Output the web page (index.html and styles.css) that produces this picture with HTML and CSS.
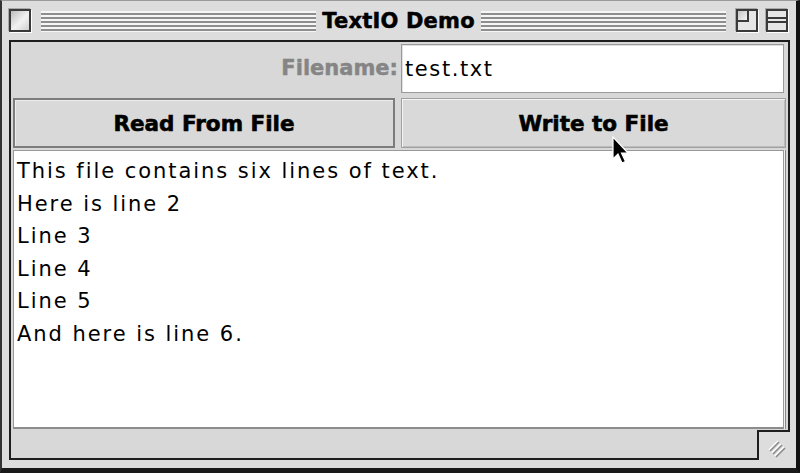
FILE: index.html
```html
<!DOCTYPE html>
<html>
<head>
<meta charset="utf-8">
<link rel="stylesheet" href="styles.css">
</head>
<body>
<div class="window">
  <div class="titlebar">
    <div class="tside">
      <span class="tbox close"></span>
      <span class="stripes"></span>
    </div>
    <span class="title">TextIO Demo</span>
    <div class="tside">
      <span class="stripes"></span>
      <span class="tbox zoom"><span class="zoom-inner"></span></span>
      <span class="tbox collapse"><span class="collapse-inner"></span></span>
    </div>
  </div>
  <div class="content">
    <div class="row file-row">
      <label class="label">Filename:</label>
      <div class="field">test.txt</div>
    </div>
    <div class="row btn-row">
      <button class="btn default">Read From File</button>
      <button class="btn">Write to File</button>
    </div>
    <div class="textarea">
      <div class="line">This file contains six lines of text.</div>
      <div class="line">Here is line 2</div>
      <div class="line">Line 3</div>
      <div class="line">Line 4</div>
      <div class="line">Line 5</div>
      <div class="line">And here is line 6.</div>
    </div>
    <div class="strip"></div>
    <div class="growbox">
      <svg width="22" height="22" viewBox="0 0 22 22">
        <g stroke-width="1.6" fill="none">
          <line x1="3" y1="13" x2="12" y2="4" stroke="#ffffff"/>
          <line x1="4" y1="14" x2="13" y2="5" stroke="#8a8a8a"/>
          <line x1="6" y1="16" x2="15" y2="7" stroke="#ffffff"/>
          <line x1="7" y1="17" x2="16" y2="8" stroke="#8a8a8a"/>
          <line x1="9" y1="19" x2="18" y2="10" stroke="#ffffff"/>
          <line x1="10" y1="20" x2="19" y2="11" stroke="#8a8a8a"/>
        </g>
      </svg>
    </div>
  </div>
  <svg class="cursor" width="18" height="30" viewBox="0 0 18 30">
    <path d="M1 1 L1 23 L6 18 L10 27 L13.5 25.5 L9.5 17 L16 17 Z" fill="#000" stroke="#fff" stroke-width="1.2" stroke-linejoin="miter"/>
  </svg>
</div>
</body>
</html>
```
FILE: styles.css
```css
* { box-sizing: border-box; }
html, body { margin: 0; padding: 0; background: #dcdcdc; }
.window {
  position: relative;
  width: 800px;
  height: 473px;
  background: #dddddd;
  border-top: 1px solid #9a9a9a;
  border-left: 2px solid #333;
  border-right: 4px solid #111;
  border-bottom: 5px solid #1a1a1a;
  display: flex;
  flex-direction: column;
  font-family: "DejaVu Sans", sans-serif;
}
.titlebar {
  height: 39px;
  display: flex;
  align-items: center;
  padding: 0 8px 0 7px;
}
.tside {
  flex: 1;
  display: flex;
  align-items: center;
}
.tbox {
  width: 22px;
  height: 23px;
  border: 2px solid #3a3a3a;
  box-shadow: 1px 1px 0 #ffffff, -1px -1px 0 #a8a8a8;
  background: linear-gradient(135deg, #bcbcbc 0%, #f2f2f2 55%, #d0d0d0 100%);
  flex: none;
  position: relative;
}
.close { margin-right: 10px; }
.stripes {
  flex: 1;
  height: 22px;
  background: repeating-linear-gradient(to bottom, #f6f6f6 0px, #f6f6f6 2px, #8e8e8e 2px, #8e8e8e 4px);
  background-size: 100% 24px;
  background-repeat: no-repeat;
  background-position: 0 1px;
}
.title {
  font-weight: bold;
  font-size: 21px;
  color: #000;
  padding: 0 6px;
  letter-spacing: 0.2px;
  line-height: 22px;
  -webkit-text-stroke: 0.5px #000;
}
.zoom {
  margin-left: 10px;
  background: #e6e6e6;
}
.zoom-inner {
  position: absolute;
  left: 0; top: 0;
  width: 11px; height: 11px;
  border-right: 2px solid #3a3a3a;
  border-bottom: 2px solid #3a3a3a;
  background: linear-gradient(135deg, #c4c4c4, #f4f4f4);
}
.collapse {
  margin-left: 8px;
  background: #e6e6e6;
}
.collapse-inner {
  position: absolute;
  left: 0; right: 0; top: 6px;
  height: 6px;
  border-top: 2px solid #3a3a3a;
  border-bottom: 2px solid #3a3a3a;
}
.content {
  position: relative;
  flex: 1;
  margin: 0 6px 8px 7px;
  border: 2px solid #1e1e1e;
  background: #d8d8d8;
  padding: 1px 2px 0 2px;
  display: flex;
  flex-direction: column;
}
.row {
  display: grid;
  grid-template-columns: 1fr 1fr;
  column-gap: 3px;
}
.file-row {
  height: 50px;
  align-items: center;
}
.label {
  text-align: right;
  font-weight: bold;
  font-size: 21px;
  color: #858585;
  padding-right: 0;
  letter-spacing: 0px;
  -webkit-text-stroke: 0.4px #858585;
}
.field {
  height: 49px;
  background: #fff;
  border: 1px solid #9a9a9a;
  box-shadow: inset 1px 1px 0 #e0e0e0;
  font-size: 21px;
  letter-spacing: 1.6px;
  padding: 0 0 0 3px;
  line-height: 49px;
  color: #000;
  margin-right: 2px;
}
.btn-row {
  height: 50px;
  margin-top: 5px;
}
.btn {
  font-family: "DejaVu Sans", sans-serif;
  font-weight: bold;
  font-size: 21.5px;
  color: #000;
  background: #d9d9d9;
  border: 1px solid #a0a0a0;
  box-shadow: inset 1px 1px 0 #f4f4f4, inset -1px -1px 0 #bdbdbd;
  margin: 0;
  padding: 0;
  height: 50px;
  letter-spacing: 0px;
  -webkit-text-stroke: 0.6px #000;
}
.btn.default {
  border: 2px solid #7c7c7c;
  box-shadow: inset 1px 1px 0 #ececec;
  margin-right: 3px;
}
.textarea {
  height: 279px;
  margin-top: 2px;
  background: #fff;
  border: 1px solid #999;
  border-bottom: 2px solid #8c8c8c;
  box-shadow: 1px 0 0 #f0f0f0, 2px 0 0 #888;
  margin-right: 2px;
  padding: 4px 0 0 3px;
  font-size: 21px;
  letter-spacing: 1.95px;
  color: #000;
}
.line {
  line-height: 32.6px;
  white-space: nowrap;
}
.strip {
  flex: 1;
}
.growbox {
  position: absolute;
  right: -2px;
  bottom: -2px;
  width: 33px;
  height: 30px;
  background: #dddddd;
  border-left: 2px solid #1e1e1e;
  border-top: 2px solid #1e1e1e;
  display: flex;
  align-items: center;
  justify-content: center;
  padding: 4px 0 0 4px;
}
.cursor {
  position: absolute;
  left: 610px;
  top: 135px;
}
```
